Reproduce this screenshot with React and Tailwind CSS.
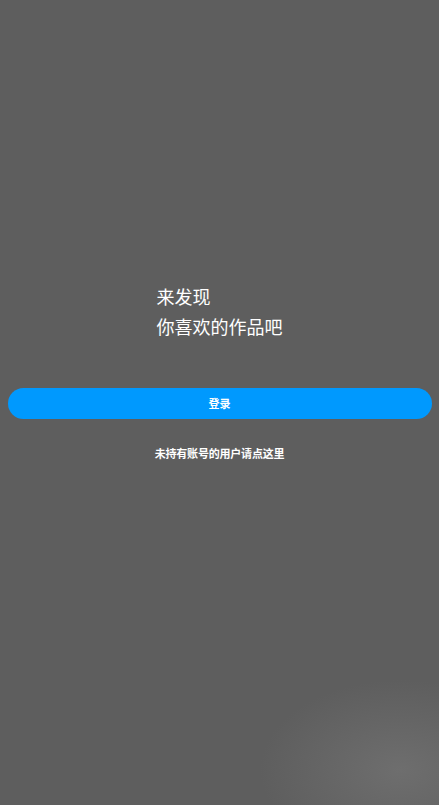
export default function App() {
  return (
    <div
      className="min-h-[805px] w-full flex flex-col items-center bg-[#5e5e5e] bg-[radial-gradient(ellipse_140px_90px_at_400px_770px,#6e6e6e,transparent)] text-white"
      style={{ fontFamily: '"Noto Sans CJK SC", "Noto Sans", sans-serif' }}
    >
      <div className="mt-[281px] text-[18px] leading-[30px] text-left">
        <p>来发现</p>
        <p>你喜欢的作品吧</p>
      </div>
      <button className="mt-[47px] w-[424px] h-[31px] rounded-full bg-[#0099fe] text-[11px] font-bold text-white">
        登录
      </button>
      <a className="mt-[26px] text-[11px] font-bold leading-4 tracking-[-0.2px]">未持有账号的用户请点这里</a>
    </div>
  );
}
